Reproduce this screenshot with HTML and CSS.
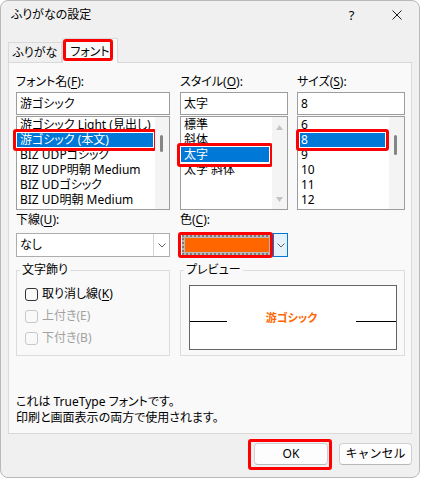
FILE: index.html
```html
<!DOCTYPE html>
<html lang="ja">
<head>
    <meta charset="UTF-8">
    <meta name="viewport" content="width=device-width, initial-scale=1.0">
    <title>ふりがなの設定</title>
    <link rel="stylesheet" href="styles.css">
</head>
<body>
    <div class="dialog">
        <div class="titlebar">
            <span class="title">ふりがなの設定</span>
            <span class="caption-btn">?</span>
            <span class="caption-btn">
                <svg width="10" height="10" viewBox="0 0 10 10"><path d="M0.5 0.5L9.5 9.5M9.5 0.5L0.5 9.5" stroke="#1b1b1b" stroke-width="1"/></svg>
            </span>
        </div>

        <div class="sheet">
            <div class="tabs">
                <div class="tab">ふりがな</div>
                <div class="tab active">フォント<span class="mark mark-tab"></span></div>
            </div>

            <div class="panel">
                <div class="fields">
                    <!-- font name -->
                    <div class="field col-font">
                        <div class="label">フォント名(<u>F</u>):</div>
                        <div class="textbox">游ゴシック</div>
                        <div class="listbox">
                            <div class="items">
                                <div class="row">游ゴシック Light (見出し)</div>
                                <div class="row selected">游ゴシック (本文)<span class="mark inset mark-font"></span></div>
                                <div class="row">BIZ UDPゴシック</div>
                                <div class="row">BIZ UDP明朝 Medium</div>
                                <div class="row">BIZ UDゴシック</div>
                                <div class="row">BIZ UD明朝 Medium</div>
                            </div>
                            <div class="vscroll"><span class="thumb thumb-font"></span></div>
                        </div>
                    </div>

                    <!-- style -->
                    <div class="field col-style">
                        <div class="label">スタイル(<u>O</u>):</div>
                        <div class="textbox">太字</div>
                        <div class="listbox">
                            <div class="items">
                                <div class="row">標準</div>
                                <div class="row">斜体</div>
                                <div class="row selected">太字<span class="mark inset mark-style"></span></div>
                                <div class="row">太字 斜体</div>
                            </div>
                            <div class="vscroll arrows">
                                <svg width="7" height="5" viewBox="0 0 7 5"><path d="M3.5 0L7 5H0Z" fill="#c4c4c4"/></svg>
                                <svg width="7" height="5" viewBox="0 0 7 5"><path d="M0 0H7L3.5 5Z" fill="#c4c4c4"/></svg>
                            </div>
                        </div>
                    </div>

                    <!-- size -->
                    <div class="field col-size">
                        <div class="label">サイズ(<u>S</u>):</div>
                        <div class="textbox">8</div>
                        <div class="listbox">
                            <div class="items">
                                <div class="row">6</div>
                                <div class="row selected">8<span class="mark inset mark-size"></span></div>
                                <div class="row">9</div>
                                <div class="row">10</div>
                                <div class="row">11</div>
                                <div class="row">12</div>
                            </div>
                            <div class="vscroll"><span class="thumb thumb-size"></span></div>
                        </div>
                    </div>

                    <!-- underline -->
                    <div class="field col-font second">
                        <div class="label">下線(<u>U</u>):</div>
                        <div class="combo">
                            <div class="combo-text">なし</div>
                            <div class="combo-drop">
                                <svg width="8" height="5" viewBox="0 0 8 5"><path d="M0.5 0.5L4 4L7.5 0.5" fill="none" stroke="#606060"/></svg>
                            </div>
                        </div>
                    </div>

                    <!-- colour -->
                    <div class="field col-style second">
                        <div class="label">色(<u>C</u>):</div>
                        <div class="combo color-combo">
                            <div class="color-main">
                                <div class="swatch-frame"><div class="swatch"></div></div>
                                <span class="mark mark-color"></span>
                            </div>
                            <div class="combo-drop hot">
                                <svg width="8" height="5" viewBox="0 0 8 5"><path d="M0.5 0.5L4 4L7.5 0.5" fill="none" stroke="#606060"/></svg>
                            </div>
                        </div>
                    </div>

                    <!-- effects -->
                    <fieldset class="group group-effects">
                        <legend>文字飾り</legend>
                        <div class="check"><span class="box"></span>取り消し線(<u>K</u>)</div>
                        <div class="check disabled"><span class="box"></span>上付き(E)</div>
                        <div class="check disabled"><span class="box"></span>下付き(B)</div>
                    </fieldset>

                    <!-- preview -->
                    <fieldset class="group group-preview">
                        <legend>プレビュー</legend>
                        <div class="preview">
                            <span class="base-line left"></span>
                            <span class="sample">游ゴシック</span>
                            <span class="base-line right"></span>
                        </div>
                    </fieldset>
                </div>

                <div class="info">
                    これは TrueType フォントです。<br>
                    印刷と画面表示の両方で使用されます。
                </div>
            </div>
        </div>

        <div class="buttons">
            <button class="btn ok">OK<span class="mark mark-ok"></span></button>
            <button class="btn">キャンセル</button>
        </div>
    </div>
</body>
</html>
```

FILE: styles.css
```css
body {
    margin: 0;
    background-color: #ffffff;
    font-family: "Noto Sans", "Noto Sans CJK JP", sans-serif;
    font-size: 12px;
    line-height: 16px;
    color: #000;
    font-feature-settings: "palt";
}
u {
    text-decoration-thickness: 1px;
    text-underline-offset: 2px;
}

.dialog {
    box-sizing: border-box;
    width: 420px;
    height: 478px;
    border: 1px solid #b9b9b9;
    border-radius: 8px;
    background-color: #f0f0f0;
    display: flex;
    flex-direction: column;
    overflow: hidden;
}

/* title bar */
.titlebar {
    height: 28px;
    display: flex;
    align-items: center;
}
.title {
    flex: 1;
    padding-left: 10px;
}
.caption-btn {
    width: 45px;
    height: 28px;
    display: flex;
    align-items: center;
    justify-content: center;
    font-size: 13px;
}

/* tabs */
.sheet {
    padding: 9px 7px 0 7px;
}
.tabs {
    display: flex;
    align-items: flex-end;
    height: 24px;
}
.tab {
    box-sizing: border-box;
    width: 54px;
    height: 20px;
    border: 1px solid #d9d9d9;
    border-bottom: none;
    text-align: center;
    line-height: 19px;
    background-color: #f0f0f0;
}
.tab.active {
    position: relative;
    z-index: 1;
    width: 56px;
    height: 25px;
    margin-bottom: -1px;
    padding-top: 3px;
    background-color: #f9f9f9;
}

.panel {
    box-sizing: border-box;
    height: 372px;
    border: 1px solid #d9d9d9;
    background-color: #f9f9f9;
    padding: 11px 7px 7px 7px;
    display: flex;
    flex-direction: column;
}

/* field grid */
.fields {
    display: grid;
    grid-template-columns: 164px 117px 108px;
}
.col-font { grid-column: 1; width: 154px; }
.col-style { grid-column: 2; width: 108px; }
.col-size { grid-column: 3; width: 108px; }
.second { margin-top: 2px; }

.label {
    margin-bottom: 2px;
}
.second .label {
    margin-bottom: 5px;
}

.textbox {
    box-sizing: border-box;
    height: 23px;
    border: 1px solid #9d9d9d;
    background-color: #fff;
    padding-left: 3px;
    line-height: 21px;
    margin-bottom: 1px;
}

.listbox {
    box-sizing: border-box;
    height: 94px;
    border: 1px solid #9d9d9d;
    background-color: #fff;
    display: flex;
}
.items {
    flex: 1;
}
.row {
    height: 15px;
    line-height: 15px;
    padding-left: 3px;
    white-space: nowrap;
}
.row.selected {
    position: relative;
    background-color: #0078d7;
    color: #fff;
}
.vscroll {
    width: 15px;
    background-color: #f4f4f4;
    position: relative;
}
.col-font .vscroll {
    width: 14px;
}
.thumb {
    display: block;
    width: 3px;
    margin-left: 5px;
    border-radius: 2px;
    background-color: #858585;
}
.thumb-font {
    margin-top: 18px;
    height: 17px;
}
.thumb-size {
    margin-top: 18px;
    height: 20px;
}
.vscroll.arrows {
    box-sizing: border-box;
    display: flex;
    flex-direction: column;
    justify-content: space-between;
    align-items: center;
    padding: 8px 0 7px 0;
}

/* combo boxes */
.combo {
    box-sizing: border-box;
    height: 24px;
    border: 1px solid #adadad;
    background-color: #fff;
    display: flex;
}
.combo-text {
    flex: 1;
    padding-left: 3px;
    line-height: 22px;
}
.combo-drop {
    box-sizing: border-box;
    width: 16px;
    border-left: 1px solid #d4d4d4;
    display: flex;
    align-items: center;
    justify-content: center;
}
.color-combo {
    border: none;
    background: none;
}
.color-main {
    position: relative;
    box-sizing: border-box;
    flex: 1;
    border: 1px solid #adadad;
    border-right: none;
    background-color: #fff;
    padding: 1px;
}
.swatch-frame {
    box-sizing: border-box;
    height: 100%;
    border: 2px dotted #7d7d7d;
    background-color: #b9b9b9;
    padding: 1px;
}
.swatch {
    height: 100%;
    background-color: #ff6600;
}
.combo-drop.hot {
    width: 15px;
    border: 1px solid #0078d7;
    background-color: #e5f1fb;
}

/* group boxes */
.group {
    margin: 5px 0 0 0;
    min-width: 0;
    border: 1px solid #dcdcdc;
}
.group legend {
    padding: 0 2px;
    line-height: 16px;
}
.group-effects {
    grid-column: 1;
    width: 154px;
    box-sizing: border-box;
    padding: 5px 3px 6px 3px;
}
.group-preview {
    grid-column: 2 / 4;
    box-sizing: border-box;
    width: 225px;
    padding: 7px 3px 5px 3px;
}
.check {
    display: flex;
    align-items: center;
    height: 22px;
    padding-left: 5px;
}
.check .box {
    box-sizing: border-box;
    width: 13px;
    height: 13px;
    border: 1px solid #333;
    border-radius: 3px;
    margin-right: 4px;
}
.check.disabled {
    color: #a2a2a2;
}
.check.disabled .box {
    border-color: #c8c8c8;
}

.preview {
    box-sizing: border-box;
    width: 208px;
    height: 65px;
    margin-left: 5px;
    border: 1px solid #646464;
    background-color: #fff;
    display: flex;
    align-items: center;
}
.base-line {
    height: 1px;
    margin-top: 7px;
    background-color: #000;
}
.base-line.left { width: 37px; }
.base-line.right { width: 40px; }
.sample {
    flex: 1;
    text-align: center;
    color: #ff6600;
    font-weight: bold;
    font-size: 11px;
}

.info {
    margin-top: auto;
}

/* buttons */
.buttons {
    display: flex;
    justify-content: flex-end;
    gap: 11px;
    padding: 9px 7px 0 0;
}
.btn {
    position: relative;
    box-sizing: border-box;
    width: 74px;
    height: 22px;
    border: 1px solid #d0d0d0;
    border-bottom-color: #b8b8b8;
    border-radius: 4px;
    background-color: #fdfdfd;
    font-family: inherit;
    font-size: 12px;
    line-height: 20px;
    padding: 0;
    color: #000;
}
.btn + .btn {
    width: 73px;
}

/* red highlight frames */
.mark {
    position: absolute;
    border: 3px solid #ff0000;
    border-radius: 3px;
    pointer-events: none;
}
.mark.inset {
    box-shadow: inset 0 0 0 1px #fff;
}
.mark-tab { top: 0; left: 0; right: 4px; bottom: 2px; }
.mark-font { top: -3px; left: -4px; right: -2px; bottom: -4px; }
.mark-style { top: -4px; left: -4px; right: -1px; bottom: -5px; }
.mark-size { top: -3px; left: -2px; right: 0; bottom: -4px; }
.mark-color { top: -2px; left: -3px; right: 0; bottom: -2px; }
.mark-ok { top: -5px; left: -7px; right: -5px; bottom: -6px; }
```
